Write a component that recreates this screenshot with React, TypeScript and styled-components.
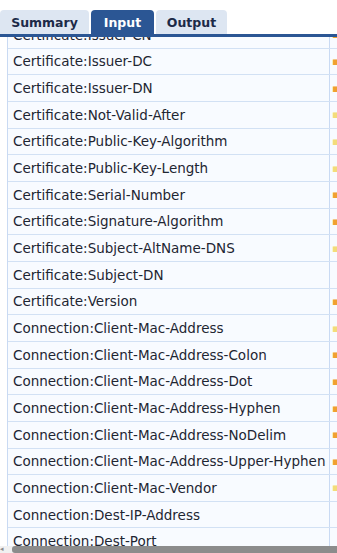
import React from "react";
import styled, { createGlobalStyle } from "styled-components";

const Global = createGlobalStyle`
  html, body { margin: 0; padding: 0; background: #ffffff; }
  body { font-family: "DejaVu Sans", Verdana, sans-serif; overflow: hidden; }
`;

const Page = styled.div`
  width: 337px;
  height: 553px;
  display: flex;
  flex-direction: column;
  overflow: hidden;
  background: #ffffff;
`;

const TabBar = styled.div`
  display: flex;
  align-items: flex-end;
  gap: 2px;
  height: 34px;
  border-bottom: 3px solid #2b5694;
  position: relative;
  z-index: 2;
  background: #ffffff;
  flex-shrink: 0;
`;

const Tab = styled.div<{ $active?: boolean; $w: number }>`
  width: ${(p) => p.$w}px;
  height: 24px;
  box-sizing: border-box;
  display: flex;
  align-items: center;
  justify-content: center;
  border-radius: 4px 4px 0 0;
  font-size: 12.5px;
  font-weight: bold;
  color: ${(p) => (p.$active ? "#ffffff" : "#1c2a48")};
  background: ${(p) => (p.$active ? "#2b5694" : "#dde6f2")};
`;

const Viewport = styled.div`
  flex: 1;
  overflow: hidden;
  padding-left: 7px;
`;

const List = styled.div`
  margin-top: -15px;
  display: flex;
  flex-direction: column;
  border-left: 1px solid #c9daf3;
`;

const Row = styled.div`
  display: flex;
  height: 26.67px;
  box-sizing: border-box;
  border-bottom: 1px solid #d2e1f4;
  background: #f8fbff;
`;

const NameCell = styled.div`
  width: 322px;
  flex-shrink: 0;
  box-sizing: border-box;
  padding-left: 5px;
  display: flex;
  align-items: center;
  font-size: 13.5px;
  color: #1e2632;
  white-space: nowrap;
  overflow: hidden;
  border-right: 1px solid #c9daf3;
`;

const ValueCell = styled.div<{ $c: string }>`
  flex: 1;
  display: flex;
  align-items: center;
  padding-left: 2px;
  overflow: hidden;
  font-size: 11px;
  color: ${(p) => p.$c};
  white-space: nowrap;
`;

const Scrollbar = styled.div`
  height: 7px;
  flex-shrink: 0;
  display: flex;
  align-items: stretch;
  background: #f0f0f0;
`;

const Arrow = styled.div`
  width: 10px;
  display: flex;
  align-items: center;
  justify-content: flex-start;
  color: #8a8a8a;
  font-size: 7px;
  line-height: 7px;
`;

const Thumb = styled.div`
  flex: 1;
  margin-left: 2px;
  background: #8c8c8c;
  border-radius: 3px 0 0 3px;
`;

const ORANGE = "#f0a030";
const YELLOW = "#f3dc7a";
const NONE = "#f8fbff";

const rows: [string, string][] = [
  ["Certificate:Issuer-CN", ORANGE],
  ["Certificate:Issuer-DC", ORANGE],
  ["Certificate:Issuer-DN", ORANGE],
  ["Certificate:Not-Valid-After", YELLOW],
  ["Certificate:Public-Key-Algorithm", YELLOW],
  ["Certificate:Public-Key-Length", YELLOW],
  ["Certificate:Serial-Number", ORANGE],
  ["Certificate:Signature-Algorithm", ORANGE],
  ["Certificate:Subject-AltName-DNS", YELLOW],
  ["Certificate:Subject-DN", NONE],
  ["Certificate:Version", ORANGE],
  ["Connection:Client-Mac-Address", YELLOW],
  ["Connection:Client-Mac-Address-Colon", ORANGE],
  ["Connection:Client-Mac-Address-Dot", ORANGE],
  ["Connection:Client-Mac-Address-Hyphen", ORANGE],
  ["Connection:Client-Mac-Address-NoDelim", ORANGE],
  ["Connection:Client-Mac-Address-Upper-Hyphen", ORANGE],
  ["Connection:Client-Mac-Vendor", YELLOW],
  ["Connection:Dest-IP-Address", NONE],
  ["Connection:Dest-Port", NONE],
];

export default function App() {
  return (
    <>
      <Global />
      <Page>
        <TabBar>
          <Tab $w={89}>Summary</Tab>
          <Tab $w={63} $active>
            Input
          </Tab>
          <Tab $w={71}>Output</Tab>
        </TabBar>
        <Viewport>
          <List>
            {rows.map(([name, c]) => (
              <Row key={name}>
                <NameCell>{name}</NameCell>
                <ValueCell $c={c}>▪</ValueCell>
              </Row>
            ))}
          </List>
        </Viewport>
        <Scrollbar>
          <Arrow>◂</Arrow>
          <Thumb />
        </Scrollbar>
      </Page>
    </>
  );
}
